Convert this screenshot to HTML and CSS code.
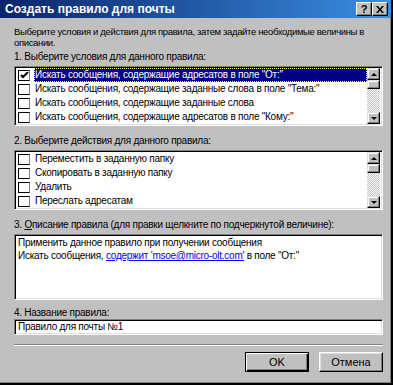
FILE: index.html
```html
<!DOCTYPE html>
<html lang="ru">

<head>
    <meta charset="utf-8">
    <meta name="viewport" content="width=device-width, initial-scale=1.0">
    <title>Создать правило для почты</title>
    <link rel="stylesheet" href="styles.css">
</head>

<body>
    <div class="window">
        <div class="titlebar">
            <span class="title">Создать правило для почты</span>
            <div class="title-btns">
                <span class="tbtn">?</span>
                <span class="tbtn">
                    <svg width="8" height="7" viewBox="0 0 8 7"><path d="M0 0h2l2 2.5L6 0h2L5 3.5 8 7H6L4 4.5 2 7H0l3-3.5z" fill="#000"/></svg>
                </span>
            </div>
        </div>

        <div class="content">
            <p class="intro">Выберите условия и действия для правила, затем задайте необходимые величины в описании.</p>

            <p class="caption">1. Выберите условия для данного правила:</p>
            <div class="listbox">
                <ul class="items">
                    <li class="selected"><span class="check on"><svg width="9" height="7" viewBox="0 0 9 7"><path d="M1 3l2 2 5-5" fill="none" stroke="#000" stroke-width="2"/></svg></span><span class="txt">Искать сообщения, содержащие адресатов в поле "От:"</span></li>
                    <li><span class="check"></span><span class="txt">Искать сообщения, содержащие заданные слова в поле "Тема:"</span></li>
                    <li><span class="check"></span><span class="txt">Искать сообщения, содержащие заданные слова</span></li>
                    <li><span class="check"></span><span class="txt">Искать сообщения, содержащие адресатов в поле "Кому:"</span></li>
                </ul>
                <div class="scrollbar">
                    <span class="sbtn"><i class="arrow up"></i></span>
                    <span class="thumb"></span>
                    <span class="track"></span>
                    <span class="sbtn"><i class="arrow down"></i></span>
                </div>
            </div>

            <p class="caption">2. Выберите действия для данного правила:</p>
            <div class="listbox">
                <ul class="items">
                    <li><span class="check"></span><span class="txt">Переместить в заданную папку</span></li>
                    <li><span class="check"></span><span class="txt">Скопировать в заданную папку</span></li>
                    <li><span class="check"></span><span class="txt">Удалить</span></li>
                    <li><span class="check"></span><span class="txt">Переслать адресатам</span></li>
                </ul>
                <div class="scrollbar">
                    <span class="sbtn"><i class="arrow up"></i></span>
                    <span class="thumb"></span>
                    <span class="track"></span>
                    <span class="sbtn"><i class="arrow down"></i></span>
                </div>
            </div>

            <p class="caption">3. <u>О</u>писание правила (для правки щелкните по подчеркнутой величине):</p>
            <div class="desc">
                <p>Применить данное правило при получении сообщения</p>
                <p>Искать сообщения, <a href="#">содержит 'msoe@micro-olt.com'</a> в поле "От:"</p>
            </div>

            <p class="caption tight">4. Название правила:</p>
            <div class="field">Правило для почты №1</div>

            <hr class="sep">

            <div class="footer">
                <button class="btn default">OK</button>
                <button class="btn">Отмена</button>
            </div>
        </div>
    </div>
</body>

</html>
```

FILE: styles.css
```css
body {
    margin: 0;
    background-color: #c0c0c0;
    font-family: "Liberation Sans", Arial, sans-serif;
    font-size: 10px;
    letter-spacing: -0.25px;
    color: #000;
}

p {
    margin: 0;
}

.window {
    width: 391px;
    height: 383px;
    overflow: hidden;
    background-color: #c0c0c0;
    border-right: 2px solid #000;
    border-bottom: 2px solid #000;
    box-shadow: inset -1px -1px #808080;
}

/***************titlebar**************/
.titlebar {
    height: 18px;
    display: flex;
    align-items: center;
    justify-content: space-between;
    padding: 0 4px 0 5px;
    background: linear-gradient(to right, #0a246a, #3a8ee0);
}

.title {
    color: white;
    font-weight: bold;
    font-size: 12px;
    letter-spacing: 0;
}

.title-btns {
    display: flex;
    margin-right: -1px;
}

.tbtn {
    width: 14px;
    height: 12px;
    display: flex;
    align-items: center;
    justify-content: center;
    background-color: #c0c0c0;
    border: 1px solid;
    border-color: #fff #000 #000 #fff;
    box-shadow: inset -1px -1px #808080;
    font-weight: bold;
    font-size: 11px;
    line-height: 1;
}

/***************content**************/
.content {
    padding: 8px 8px 0 14px;
}

.intro {
    font-size: 9.5px;
    letter-spacing: -0.35px;
    line-height: 11px;
    height: 22px;
    width: 366px;
}

.caption {
    line-height: 11px;
    margin-top: 3px;
    margin-bottom: 4px;
    white-space: nowrap;
}

.caption.tight {
    margin-bottom: 1px;
}

.listbox {
    height: 56px;
    display: flex;
    background-color: white;
    border: 1px solid;
    border-color: #808080 #fff #fff #808080;
    box-shadow: inset 1px 1px #000, inset -1px -1px #dfdfdf;
    padding: 1px 2px 1px 1px;
    margin-bottom: 9px;
}

.items {
    flex: 1;
    list-style: none;
    margin: 0;
    padding: 0;
}

.items li {
    height: 14px;
    display: flex;
    align-items: center;
}

.check {
    width: 10px;
    height: 9px;
    margin: 0 4px 0 2px;
    border: 1px solid #000;
    border-right-color: #808080;
    background-color: white;
    display: flex;
    align-items: center;
    justify-content: center;
}

.txt {
    flex: 1;
    height: 14px;
    line-height: 14px;
    padding-left: 1px;
    white-space: nowrap;
}

.selected .txt {
    background-color: #000080;
    color: white;
    outline: 1px dotted #ffff80;
    outline-offset: -1px;
}

/***************scrollbar**************/
.scrollbar {
    width: 13px;
    display: flex;
    flex-direction: column;
}

.sbtn,
.thumb {
    background-color: #c0c0c0;
    border: 1px solid;
    border-color: #dfdfdf #000 #000 #dfdfdf;
    box-shadow: inset -1px -1px #808080, inset 1px 1px #fff;
}

.sbtn {
    height: 10px;
    display: flex;
    align-items: center;
    justify-content: center;
}

.thumb {
    height: 7px;
}

.track {
    flex: 1;
    background-color: #fff;
    background-image: repeating-conic-gradient(#c0c0c0 0 25%, #fff 0 50%);
    background-size: 2px 2px;
}

.arrow {
    width: 0;
    height: 0;
    border-left: 3px solid transparent;
    border-right: 3px solid transparent;
}

.arrow.up {
    border-bottom: 3px solid #000;
}

.arrow.down {
    border-top: 3px solid #000;
}

/***************description**************/
.desc {
    height: 62px;
    background-color: white;
    border: 1px solid;
    border-color: #808080 #fff #fff #808080;
    box-shadow: inset 1px 1px #000, inset -1px -1px #dfdfdf;
    padding: 1px 3px;
    line-height: 13px;
    margin-bottom: 7px;
}

.desc a {
    color: #0000ff;
}

.field {
    height: 14px;
    line-height: 14px;
    background-color: white;
    border: 1px solid;
    border-color: #808080 #fff #fff #808080;
    box-shadow: inset 1px 1px #000, inset -1px -1px #dfdfdf;
    padding: 0 3px;
}

.sep {
    margin: 9px 0 0;
    border: 0;
    border-top: 1px solid #808080;
    border-bottom: 1px solid #fff;
}

/***************buttons**************/
.footer {
    display: flex;
    justify-content: flex-end;
    gap: 10px;
    margin-top: 6px;
}

.btn {
    width: 64px;
    height: 20px;
    padding: 0;
    font-family: inherit;
    font-size: 11px;
    background-color: #c0c0c0;
    border: 1px solid;
    border-color: #fff #000 #000 #fff;
    box-shadow: inset -1px -1px #808080, inset 1px 1px #dfdfdf;
}

.btn.default {
    border-color: #000;
    box-shadow: inset 1px 1px #fff, inset -1px -1px #000, inset -2px -2px #808080;
}
```
